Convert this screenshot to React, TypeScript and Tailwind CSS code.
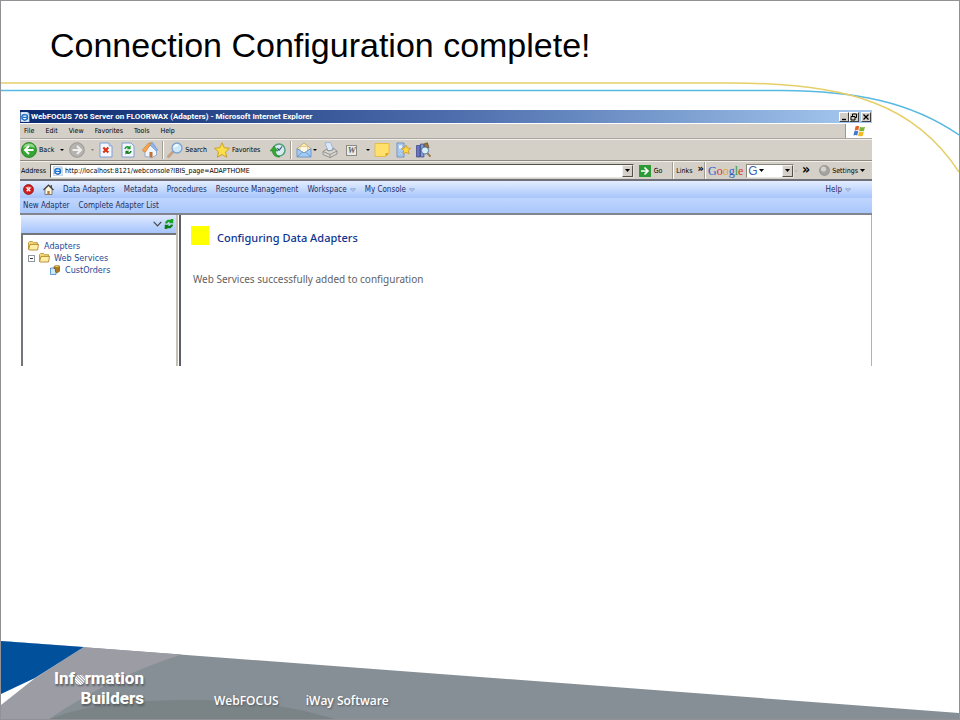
import type { ReactNode } from "react";

const ui = "font-['DejaVu_Sans_Condensed','DejaVu_Sans',sans-serif]";

function Icon({ size = "size-4", box = "0 0 16 16", children }: { size?: string; box?: string; children: ReactNode }) {
  return (
    <svg className={`${size} shrink-0`} viewBox={box} aria-hidden="true">
      {children}
    </svg>
  );
}

function Caret({ className = "h-[3px] w-[5px] text-black" }: { className?: string }) {
  return (
    <svg className={`shrink-0 ${className}`} viewBox="0 0 5 3" preserveAspectRatio="none" aria-hidden="true">
      <path d="M0 0h5L2.5 3z" fill="currentColor" />
    </svg>
  );
}

function MenuArrow() {
  return (
    <svg className="h-1 w-[6px] shrink-0" viewBox="0 0 6 4" aria-hidden="true">
      <path d="M.5.8h5L3 3.4z" fill="#c3d4f5" stroke="#7d93bf" strokeWidth=".7" />
    </svg>
  );
}

function IeIcon({ size }: { size: string }) {
  return (
    <Icon size={size} box="0 0 12 12">
      <path d="M1 0h8l2 2v10H1z" fill="#f4f8fd" stroke="#7d9cc8" strokeWidth=".7" />
      <circle cx="5.6" cy="6.4" r="3.4" fill="none" stroke="#1d6fc4" strokeWidth="1.8" />
      <path d="M3 6.5h6" stroke="#1d6fc4" strokeWidth="1.4" />
      <path d="M1 9.5C2 5 7 2 10.5 2.6" fill="none" stroke="#4aa0e6" strokeWidth=".9" />
    </Icon>
  );
}

function Folder() {
  return (
    <Icon size="h-[10px] w-[11px]" box="0 0 11 10">
      <path d="M.5 8.5V1.5l1-1h3l1 1.2h4v2" fill="#f6dc7c" stroke="#b8892a" strokeWidth=".8" />
      <path d="M.6 8.6 2 3.4h8.5L9.6 9H1z" fill="#ffefa3" stroke="#a87a22" strokeWidth=".8" />
    </Icon>
  );
}

function Recycle({ size }: { size: string }) {
  return (
    <Icon size={size} box="0 0 10 10">
      <path d="M1.200 4.600V3L3.500.7H6.300L7.300 0 9.300 0V4.200H4.800L6 3H4.500L3 4.600z" fill="#19a522" />
      <path d="M8.800 5.400V7L6.500 9.300H3.700L2.700 10H.7V5.800h4.500L4 7h1.500L7 5.400z" fill="#0c7d16" />
    </Icon>
  );
}

function ToolDivider() {
  return <span className="h-[18px] w-[2px] shrink-0 border-l border-[#a19d94] bg-white" />;
}

function DropButton({ label }: { label: string }) {
  return (
    <button
      aria-label={label}
      className="flex h-[12px] w-[11px] shrink-0 items-center justify-center border border-t-[#f4f2ee] border-l-[#f4f2ee] border-r-[#55524c] border-b-[#55524c] bg-[#d4d0c8]"
    >
      <Caret />
    </button>
  );
}

function TitleBar() {
  const control =
    "flex h-[10px] w-[10px] items-center justify-center border border-t-white border-l-white border-r-[#404040] border-b-[#404040] bg-[#d4d0c8]";
  return (
    <div className="flex h-[13px] items-center gap-px bg-linear-to-r from-[#0c2a70] via-[#4c6cab] to-[#a6caf0]">
      <IeIcon size="size-[10px]" />
      <h2 className="grow font-['Roboto',sans-serif] text-[8px] leading-[12px] font-bold whitespace-nowrap text-white">
        WebFOCUS 765 Server on FLOORWAX (Adapters) - Microsoft Internet Explorer
      </h2>
      <div className="flex pr-px">
        <button aria-label="Minimize" className={control}>
          <Icon size="size-[8px]" box="0 0 8 8"><path d="M2 6.500h4" stroke="#000" strokeWidth="1.400" /></Icon>
        </button>
        <button aria-label="Restore" className={control}>
          <Icon size="size-[8px]" box="0 0 8 8">
            <path d="M2.500 3V1h4v3.500H5M1 3.500h4V7H1z" fill="none" stroke="#000" />
          </Icon>
        </button>
        <button aria-label="Close" className={`ml-[2px] ${control}`}>
          <Icon size="size-[8px]" box="0 0 8 8"><path d="m1.500 1.500 5 5m0-5-5 5" stroke="#000" strokeWidth="1.300" /></Icon>
        </button>
      </div>
    </div>
  );
}

function MenuBar() {
  return (
    <div className="flex h-[16px] border-t border-b border-t-white border-b-[#aaa69d]">
      <nav className="flex grow items-center gap-[11px] border-r border-[#9d998f] pl-1">
        {["File", "Edit", "View", "Favorites", "Tools", "Help"].map((name) => (
          <button key={name}>{name}</button>
        ))}
      </nav>
      <div className="flex w-[26px] items-center justify-center bg-white">
        <Icon size="h-[12px] w-[13px]" box="0 0 13 12">
          <path d="M2.500 1.500C4 .4 5 .6 6.200 1.300L5.300 5.400c-1.300-.7-2.300-.6-3.700 0z" fill="#e8642c" />
          <path d="M7 1.700c1.600.8 3 .8 5 0l-1 4.100c-1.700.8-3.300.7-4.900 0z" fill="#7bb535" />
          <path d="M1.400 6.200c1.400-.7 2.600-.6 3.800.1l-1 4.200c-1.200-.8-2.400-.8-3.800-.1z" fill="#3f78cf" />
          <path d="M6 6.600c1.600.8 3.100.8 4.800 0l-1 4.200c-1.700.7-3.200.7-4.700-.1z" fill="#f3b927" />
        </Icon>
      </div>
    </div>
  );
}

function ToolBar() {
  const smallCaret = "h-[2px] w-[4px] text-black";
  return (
    <div className="flex h-[22px] items-center border-t border-b border-t-[#f2f0ec] border-b-[#8d897f] pl-px">
      <button className="flex items-center gap-[2px]">
        <Icon>
          <circle cx="8" cy="8" r="7.500" fill="#35a634" stroke="#1d7d22" strokeWidth=".8" />
          <path d="M2 6a6.300 6.300 0 0 1 12 0c-4-2-8-2-12 0z" fill="#8fd888" />
          <path d="M12.500 8h-8M8 4 4 8l4 4" fill="none" stroke="#fff" strokeWidth="2" />
        </Icon>
        Back
      </button>
      <span className="ml-[6px] flex"><Caret className={smallCaret} /></span>
      <button aria-label="Forward" className="ml-[5px] flex items-center gap-[6px]">
        <Icon>
          <circle cx="8" cy="8" r="7.300" fill="#b4b3b0" stroke="#8f8e8b" strokeWidth=".8" />
          <path d="M3.500 8h8M8 4l4 4-4 4" fill="none" stroke="#f0efed" strokeWidth="2" />
        </Icon>
        <Caret className="h-[2px] w-[3px] text-[#85827b]" />
      </button>
      <button aria-label="Stop" className="ml-[4px]">
        <Icon>
          <path d="M2 1h9l3 3v11H2z" fill="#f5f9ff" stroke="#7f9ed3" />
          <path d="M11 1v3h3" fill="#c7d8f4" stroke="#7f9ed3" strokeWidth=".7" />
          <path d="m5.300 5.500 5 5m0-5-5 5" stroke="#dc3416" strokeWidth="2.200" />
        </Icon>
      </button>
      <button aria-label="Refresh" className="ml-[6px]">
        <Icon>
          <path d="M2 1h9l3 3v11H2z" fill="#f5f9ff" stroke="#7f9ed3" />
          <path d="M4.300 7C4.800 4 7.500 3.300 9.300 4.500L10.600 3.200v4H6.800l1.300-1.400C7 5.300 6 6 5.900 7z" fill="#1e9b2b" />
          <path d="M11.700 9c-.5 3-3.200 3.700-5 2.500l-1.300 1.300v-4h3.800l-1.300 1.400c1.100.5 2.100-.2 2.200-1.200z" fill="#147f20" />
        </Icon>
      </button>
      <button aria-label="Home" className="ml-[6px]">
        <Icon>
          <path d="M3 8v6.500l7 1 4.500-2.500V7L9 3z" fill="#eff5fd" stroke="#7a94c4" strokeWidth=".7" />
          <path d="M8.500.8 10.500.5 15.800 8l-2 .8L7.500 2.500z" fill="#8fb4ea" stroke="#5c83c4" strokeWidth=".5" />
          <path d="M.4 8 6.500 1 9 1.200 4 9.500 2 10z" fill="#f5a64c" stroke="#cc7a28" strokeWidth=".6" />
          <path d="M7.500 10h3v5.400l-3-.5z" fill="#bb7233" />
        </Icon>
      </button>
      <span className="ml-[4px] flex"><ToolDivider /></span>
      <button className="ml-[3px] flex items-center gap-[2px]">
        <Icon>
          <path d="m1.500 14.500 5-5.200" stroke="#c6a287" strokeWidth="3" strokeLinecap="round" />
          <circle cx="10" cy="6" r="5" fill="#cfe9fb" stroke="#7aa3d2" strokeWidth="1.300" />
          <path d="M7 5.500C7.500 3.500 9 2.800 11 3" fill="none" stroke="#fff" strokeWidth="1.400" />
        </Icon>
        Search
      </button>
      <button className="ml-[7px] flex items-center gap-[2px]">
        <Icon>
          <path d="m8 .8 2.200 4.900 5.300.6-4 3.600 1.200 5.300L8 12.500l-4.700 2.700 1.200-5.300-4-3.600 5.300-.6z" fill="#fbe04c" stroke="#c99a1b" strokeWidth=".9" />
        </Icon>
        Favorites
      </button>
      <button aria-label="History" className="ml-[10px]">
        <Icon>
          <circle cx="9" cy="8" r="6" fill="#d8ecf0" stroke="#4f9f7c" strokeWidth="1.500" />
          <path d="M9 8.500 12 4.500M9 8.500 7.500 6" stroke="#36557c" strokeWidth="1.200" />
          <path d="M10 15C5 15.500 2.500 12.500 2.500 9H0L4 4l4 5H5.500c0 2.500 1.500 4.500 4.500 6z" fill="#35a634" stroke="#1d7d22" strokeWidth=".5" />
        </Icon>
      </button>
      <span className="ml-[4px] flex"><ToolDivider /></span>
      <button aria-label="Mail" className="ml-[4px] flex items-center gap-px">
        <Icon>
          <path d="M1 6.500 8 1l7 5.500-3 2H4z" fill="#ffe9a8" stroke="#b0a070" strokeWidth=".7" />
          <path d="M4 4.500h7.500v6H4z" fill="#fff8e2" stroke="#c9a96b" strokeWidth=".5" />
          <path d="M1 6.500 8 11l7-4.500V15H1z" fill="#a5cdf4" stroke="#5b8cc8" strokeWidth=".8" />
          <path d="m1.500 14.500 5-4.500m8 4.500-5-4.500" stroke="#5b8cc8" strokeWidth=".8" />
        </Icon>
        <Caret className={smallCaret} />
      </button>
      <button aria-label="Print" className="ml-[5px]">
        <Icon>
          <path d="M3 .8 8.500.5 11.500 8 6 9z" fill="#dce9fb" stroke="#8da8d2" strokeWidth=".7" />
          <path d="m1 9.500 4-2.500 1 2 5-1 0-2 4 3v3L8 15.500l-7-3z" fill="#d9d7d2" stroke="#83817d" strokeWidth=".8" />
          <path d="m1 9.500 7 3 7-3.500M8 12.500v3" fill="none" stroke="#83817d" strokeWidth=".8" />
        </Icon>
      </button>
      <button aria-label="Edit with Word" className="ml-[8px] flex items-center gap-[9px]">
        <span className="flex size-[11px] items-center justify-center border border-[#8c8a86] bg-[#eceae7] font-['Liberation_Serif',serif] text-[9px] leading-none font-bold text-[#66645f] italic">W</span>
        <Caret className={smallCaret} />
      </button>
      <button aria-label="Notes" className="ml-[4px]">
        <Icon>
          <path d="M1 1.500h14v9.800L11.500 14.500H1z" fill="#ffe06c" stroke="#e6b532" strokeWidth=".8" />
          <path d="M11.500 14.500v-3.200H15z" fill="#d89f1e" />
        </Icon>
      </button>
      <button aria-label="Messenger" className="ml-[5px]">
        <Icon>
          <path d="M2 1h7v14H2z" fill="#b9d5f4" stroke="#5980b5" strokeWidth=".8" />
          <path d="M3.500 3H7.500v4h-4zM3.500 9h1.500v1.500H3.500zm2.500 0h1.500v1.500H6zM3.500 12h1.500v1.500H3.500zm2.500 0h1.500v1.500H6z" fill="#eff7ff" stroke="#5e93cf" strokeWidth=".4" />
          <path d="m11 3 1.400 3 3.300.4-2.400 2.200.7 3.300-3-1.700-2.900 1.700.6-3.300L6.300 6.400 9.600 6z" fill="#fcd844" stroke="#c6901e" strokeWidth=".7" />
        </Icon>
      </button>
      <button aria-label="Research" className="ml-[4px]">
        <Icon>
          <path d="M1.500 3.500h3.600V15H1.500z" fill="#6873c5" stroke="#33407f" strokeWidth=".7" />
          <path d="M5.500 2h3.400v13H5.500z" fill="#7e9ad8" stroke="#33407f" strokeWidth=".7" />
          <path d="m9.500 1.500 3-.7 1.500 5H9.500z" fill="#98743e" stroke="#574328" strokeWidth=".6" />
          <circle cx="10" cy="8.500" r="3.600" fill="#d7edfa" stroke="#486f9d" strokeWidth=".9" />
          <path d="m12.500 11.300 3 3.300" stroke="#9a7657" strokeWidth="1.800" />
        </Icon>
      </button>
    </div>
  );
}

function AddressBar() {
  return (
    <div className="flex h-[18px] items-center border-t border-[#f2f0ec] pl-px">
      <label htmlFor="address" className="mr-[4px]">Address</label>
      <div className="flex h-[14px] grow items-center border border-t-[#55524c] border-l-[#55524c] border-r-[#e8e5df] border-b-[#e8e5df] bg-white pl-[2px]">
        <IeIcon size="size-[10px]" />
        <input
          id="address"
          defaultValue="http://localhost:8121/webconsole?IBIS_page=ADAPTHOME"
          className="ml-[2px] min-w-0 grow text-black outline-none"
        />
        <DropButton label="Show address history" />
      </div>
      <button className="ml-[5px] flex items-center gap-[3px]">
        <Icon size="size-[12px]" box="0 0 12 12">
          <path d="M0 0h12v12H0z" fill="#2c9a35" />
          <path d="M2 6h6.500M5.500 2.500 9 6 5.500 9.500" fill="none" stroke="#fff" strokeWidth="1.700" />
        </Icon>
        Go
      </button>
      <span className="ml-[10px] flex"><ToolDivider /></span>
      <button className="ml-[2px]">Links</button>
      <button aria-label="More links" className="mb-1 ml-[5px] text-[11px] leading-[10px] font-bold">»</button>
      <span className="flex"><ToolDivider /></span>
      <span className="ml-[2px] font-['Liberation_Serif',serif] text-[12px] leading-[14px]">
        <span className="text-[#2a5fc9]">G</span><span className="text-[#d2352c]">o</span><span className="text-[#dfa51c]">o</span><span className="text-[#2a5fc9]">g</span><span className="text-[#2f9c42]">l</span><span className="text-[#d2352c]">e</span>
      </span>
      <div className="ml-[3px] flex h-[14px] w-[48px] items-center border border-t-[#8b8880] border-l-[#8b8880] border-r-[#e8e5df] border-b-[#e8e5df] bg-white pl-px">
        <span className="mr-px font-['Liberation_Sans',sans-serif] text-[12px] leading-[12px] text-[#3e63ad]">G</span>
        <Caret />
        <input aria-label="Google search" className="w-0 min-w-0 grow outline-none" />
        <DropButton label="Show searches" />
      </div>
      <span className="text-[#77746d]">◦</span>
      <button aria-label="More tools" className="mb-1 ml-[4px] text-[14px] leading-[10px] font-bold">»</button>
      <button className="mr-[7px] ml-[9px] flex items-center gap-[2px]">
        <Icon size="size-[11px]" box="0 0 11 11">
          <circle cx="5.500" cy="5.500" r="5" fill="#a4a3a0" stroke="#84827e" strokeWidth=".6" />
          <circle cx="4.500" cy="4" r="2.600" fill="#d3d2cf" />
        </Icon>
        Settings
        <Caret />
      </button>
    </div>
  );
}

function ConsoleMenu() {
  return (
    <div className="border-t-2 border-t-[#6f7079] text-[8px] text-[#1d2f5f]">
      <nav className="flex h-[17px] items-center gap-[9px] bg-linear-to-b from-[#e4edff] to-[#a6c5fb] pr-[21px] pl-[3px]">
        <button aria-label="Close console">
          <Icon size="size-[11px]" box="0 0 11 11">
            <circle cx="5.500" cy="5.500" r="5" fill="#cf1d1d" stroke="#8d1414" strokeWidth=".7" />
            <path d="M2 4a4 3 0 0 1 7 0z" fill="#ef8f86" />
            <path d="m3.700 3.700 3.600 3.600m0-3.600L3.700 7.300" stroke="#fff" strokeWidth="1.300" />
          </Icon>
        </button>
        <button aria-label="Console home">
          <Icon size="size-[11px]" box="0 0 11 11">
            <path d="M2 5v5.500h7V5L5.500 1.800z" fill="#fff7e0" stroke="#55514b" strokeWidth=".7" />
            <path d="M.5 6 5.500 1l5 5M8.300 1v2.500" fill="none" stroke="#464038" strokeWidth="1.200" />
            <path d="M4.300 7h2.400v3.500H4.300z" fill="#b97a32" />
          </Icon>
        </button>
        <button>Data Adapters</button>
        <button>Metadata</button>
        <button>Procedures</button>
        <button>Resource Management</button>
        <button className="flex items-center gap-[3px]">Workspace<MenuArrow /></button>
        <button className="flex items-center gap-[3px]">My Console<MenuArrow /></button>
        <button className="ml-auto flex items-center gap-[3px]">Help<MenuArrow /></button>
      </nav>
      <nav className="flex h-[17px] items-center gap-[9px] border-b-2 border-b-[#83858e] bg-linear-to-b from-[#c0d6fe] to-[#a9c7fb] pl-[3px]">
        <button>New Adapter</button>
        <button>Complete Adapter List</button>
      </nav>
    </div>
  );
}

function AdapterTree() {
  return (
    <aside className="flex w-[158px] shrink-0 flex-col border-r-2 border-[#c4c0b8] pl-px">
      <div className="flex h-[18px] items-center justify-end gap-[2px] bg-linear-to-b from-[#dfe9ff] to-[#a6c4fb] pr-[2px]">
        <button aria-label="Collapse">
          <Icon size="h-[6px] w-[9px]" box="0 0 9 6"><path d="m.7.8 3.800 4 3.800-4" fill="none" stroke="#45464e" strokeWidth="1.200" /></Icon>
        </button>
        <button aria-label="Refresh tree"><Recycle size="size-[10px]" /></button>
      </div>
      <ul className="grow border-t-2 border-l-2 border-[#74767c] pt-[5px] pl-[5px] text-[9px] leading-[12px] text-[#254a97]">
        <li><a href="#adapters" className="flex items-center gap-[5px]"><Folder />Adapters</a></li>
        <li>
          <div className="flex items-center gap-1">
            <button aria-label="Collapse Web Services" className="flex size-[7px] items-center justify-center border border-[#93979f] bg-white">
              <span className="h-px w-[3px] bg-[#333]" />
            </button>
            <a href="#web-services" className="flex items-center gap-[4px]"><Folder />Web Services</a>
          </div>
          <ul className="pl-[22px]">
            <li>
              <a href="#custorders" className="flex items-center gap-[5px]">
                <Icon size="size-[10px]" box="0 0 10 10">
                  <path d="M.5 3h3.800L6 4.800v4.700H.5z" fill="#cfe6fb" stroke="#3e86cf" strokeWidth=".8" />
                  <path d="M4 1.300 7 .3l2.800.8v5L7 8 5.500 7V4L4 3.500z" fill="#a9791c" stroke="#594013" strokeWidth=".5" />
                  <path d="m4 1.300 3 .9 2.800-1L7 .3z" fill="#e7c35e" />
                </Icon>
                CustOrders
              </a>
            </li>
          </ul>
        </li>
      </ul>
    </aside>
  );
}

function Browser() {
  return (
    <section className={`mr-[87px] ml-[19px] flex h-[256px] flex-col bg-[#d4d0c8] text-[7px] leading-[10px] whitespace-nowrap text-black ${ui}`}>
      <TitleBar />
      <MenuBar />
      <ToolBar />
      <AddressBar />
      <ConsoleMenu />
      <div className="flex min-h-0 grow bg-white">
        <AdapterTree />
        <main className="ml-px grow border-r border-l-2 border-r-[#b5b2ab] border-l-[#5d5e63] pt-[11px] pl-[10px] font-['Noto_Sans',sans-serif]">
          <div className="flex items-end gap-[8px]">
            <span className="h-[19px] w-[18px] bg-[#ff0]" />
            <h3 className="text-[11px] leading-[14px] font-medium text-[#0f3590]">Configuring Data Adapters</h3>
          </div>
          <p className="mt-[27px] pl-[2px] text-[10px] leading-[14px] text-[#626262]">
            Web Services successfully added to configuration
          </p>
        </main>
      </div>
    </section>
  );
}

function Footer() {
  return (
    <footer className="relative mt-auto flex h-[78px] items-end overflow-hidden text-white">
      <svg className="absolute inset-0 size-full" viewBox="0 0 960 78" preserveAspectRatio="none" aria-hidden="true">
        <path d="M0 0 960 72v6H0z" fill="#878f96" />
        <path d="M0 0 181 13.500Q110 36 48 78H0z" fill="#9b9ca4" />
        <path d="M0 0 83 6Q56 23 33 38L0 64z" fill="#fff" />
        <path d="M0 0 83 6 34 37 0 53z" fill="#00509c" />
        <path d="M49 78C95 60 150 59 200 59c55 1 95 7 134 19z" fill="#7a8386" />
      </svg>
      <div className="relative ml-[51px] flex w-[92px] flex-col items-end pb-[11px] font-['Roboto',sans-serif] text-[17px] leading-[20px] font-extrabold [text-shadow:1px_2px_2px_#555b60]">
        <span>
          Inf
          <span className="relative">
            o
            <span className="absolute bottom-[3px] left-0 size-[10px] rounded-full bg-[repeating-linear-gradient(45deg,#fff_0_1px,#b5b8be_1px_2px)]" />
          </span>
          rmation
        </span>
        <span>Builders</span>
      </div>
      <div className="relative ml-[70px] flex gap-[27px] pb-[9px] font-['Open_Sans',sans-serif] text-[12px] leading-[18px] font-semibold [text-shadow:1px_1px_2px_#555b60]">
        <span>WebFOCUS</span>
        <span>iWay Software</span>
      </div>
    </footer>
  );
}

export default function App() {
  return (
    <div className="relative flex min-h-screen flex-col overflow-hidden border border-[#929296] bg-white">
      <svg className="absolute top-0 left-0 h-[180px] w-full" viewBox="0 0 958 180" preserveAspectRatio="none" aria-hidden="true">
        <path d="M0 89.500H780C855 90 910 101 958 134" fill="none" stroke="#58b9e2" strokeWidth="1.500" />
        <path d="M0 82H730C850 82 915 105 958 171" fill="none" stroke="#e6cf68" strokeWidth="1.500" />
      </svg>
      <header className="relative h-[109px] pt-[24px] pl-[49px]">
        <h1 className="font-['Liberation_Sans',Arial,sans-serif] text-[34px] leading-[40px] text-black">Connection Configuration complete!</h1>
      </header>
      <Browser />
      <Footer />
    </div>
  );
}
